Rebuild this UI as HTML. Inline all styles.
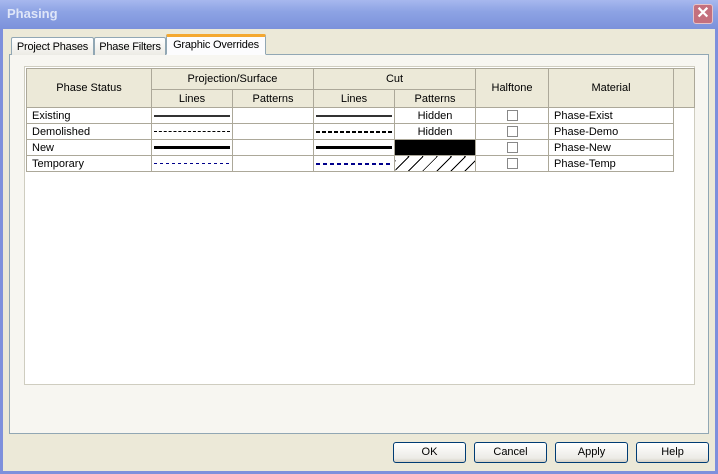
<!DOCTYPE html>
<html><head><style>
*{margin:0;padding:0;box-sizing:border-box}
body{width:718px;height:474px;overflow:hidden;font-family:"Liberation Sans",sans-serif;font-size:11px;color:#000;background:#7a8ed8}
.win{position:absolute;left:0;top:0;width:718px;height:474px;background:#ece9d8;border:3px solid #7e90dc;border-top:none}
.title{position:absolute;left:0;top:0;width:718px;height:29px;background:linear-gradient(#a7b8ee,#8da3e4 40%,#7c92db);}
.title span{position:absolute;left:7px;top:6px;color:#dfe6f8;font-weight:bold;font-size:13px}
.close{position:absolute;left:693px;top:4px;width:20px;height:20px;background:#c4707e;border:1px solid #e6c3c8;border-radius:3px;color:#fff;font-size:16px;line-height:18px;text-align:center;font-weight:bold}
.tab{position:absolute;top:37px;height:18px;border:1px solid #91a7b4;border-bottom:none;background:linear-gradient(#fff,#ecebe5);padding:3px 0 0;text-align:center;font-size:11px;letter-spacing:-0.2px;border-radius:2px 2px 0 0;white-space:nowrap;overflow:hidden}
.panel{position:absolute;left:9px;top:54px;width:700px;height:380px;border:1px solid #91a7b4;background:#f7f6f1}
.white{position:absolute;left:24px;top:66px;width:671px;height:319px;background:#fff;border:1px solid #cfcdc0}
table{position:absolute;left:26px;top:68px;border-collapse:collapse;table-layout:fixed}
td{border:1px solid #aca899;height:16px;padding:0;font-size:11px;white-space:nowrap;overflow:hidden}
.h td{background:#ece9d8;text-align:center;height:21px}
.h2 td{height:18px}
.btn{position:absolute;top:442px;width:73px;height:21px;border:1px solid #003c74;border-radius:3px;background:linear-gradient(#fff,#ecebe6 80%,#d6d0c5);text-align:center;line-height:19px;font-size:11px}
.ln{height:0;margin:0 2px}
.cb{width:11px;height:11px;border:1px solid #888;margin:0 auto}
</style></head><body>
<div class="win"></div>
<div class="title"><span>Phasing</span></div>
<div class="close">✕</div>
<div class="panel"></div>
<div class="tab" style="left:11px;width:83px">Project Phases</div>
<div class="tab" style="left:94px;width:72px">Phase Filters</div>
<div class="tab" style="left:166px;top:34px;height:21px;width:100px;background:#fcfcfe;border-top:3px solid #f4a830;border-bottom:1px solid #fcfcfe;padding-top:2px">Graphic Overrides</div>
<div class="white"></div>
<table>
<colgroup><col style="width:125px"><col style="width:81px"><col style="width:81px"><col style="width:81px"><col style="width:81px"><col style="width:73px"><col style="width:125px"><col style="width:21px"></colgroup>
<tr class="h"><td rowspan="2">Phase Status</td><td colspan="2">Projection/Surface</td><td colspan="2">Cut</td><td rowspan="2">Halftone</td><td rowspan="2">Material</td><td rowspan="2"></td></tr>
<tr class="h h2"><td>Lines</td><td>Patterns</td><td>Lines</td><td>Patterns</td></tr>
<tr><td style="padding-left:5px">Existing</td><td><div class="ln" style="border-top:2px solid #333"></div></td><td></td><td><div class="ln" style="border-top:2px solid #333"></div></td><td style="text-align:center">Hidden</td><td><div class="cb"></div></td><td style="padding-left:5px">Phase-Exist</td><td style="border:none"></td></tr>
<tr><td style="padding-left:5px">Demolished</td><td><div class="ln" style="border-top:1px dashed #000"></div></td><td></td><td><div class="ln" style="height:2px;background:repeating-linear-gradient(90deg,#000 0 4px,transparent 4px 6px)"></div></td><td style="text-align:center">Hidden</td><td><div class="cb"></div></td><td style="padding-left:5px">Phase-Demo</td><td style="border:none"></td></tr>
<tr><td style="padding-left:5px">New</td><td><div class="ln" style="border-top:3px solid #000"></div></td><td></td><td><div class="ln" style="border-top:3px solid #000"></div></td><td style="background:#000"></td><td><div class="cb"></div></td><td style="padding-left:5px">Phase-New</td><td style="border:none"></td></tr>
<tr><td style="padding-left:5px">Temporary</td><td><div class="ln" style="height:1px;background:repeating-linear-gradient(90deg,#00008b 0 3px,transparent 3px 6px)"></div></td><td></td><td><div class="ln" style="height:2px;background:repeating-linear-gradient(90deg,#00008b 0 4px,transparent 4px 7px)"></div></td><td style="background:repeating-linear-gradient(135deg,#fff 0 9px,#000 9px 10px)"></td><td><div class="cb"></div></td><td style="padding-left:5px">Phase-Temp</td><td style="border:none"></td></tr>
</table>
<div class="btn" style="left:393px">OK</div>
<div class="btn" style="left:474px">Cancel</div>
<div class="btn" style="left:555px">Apply</div>
<div class="btn" style="left:636px">Help</div>
</body></html>
